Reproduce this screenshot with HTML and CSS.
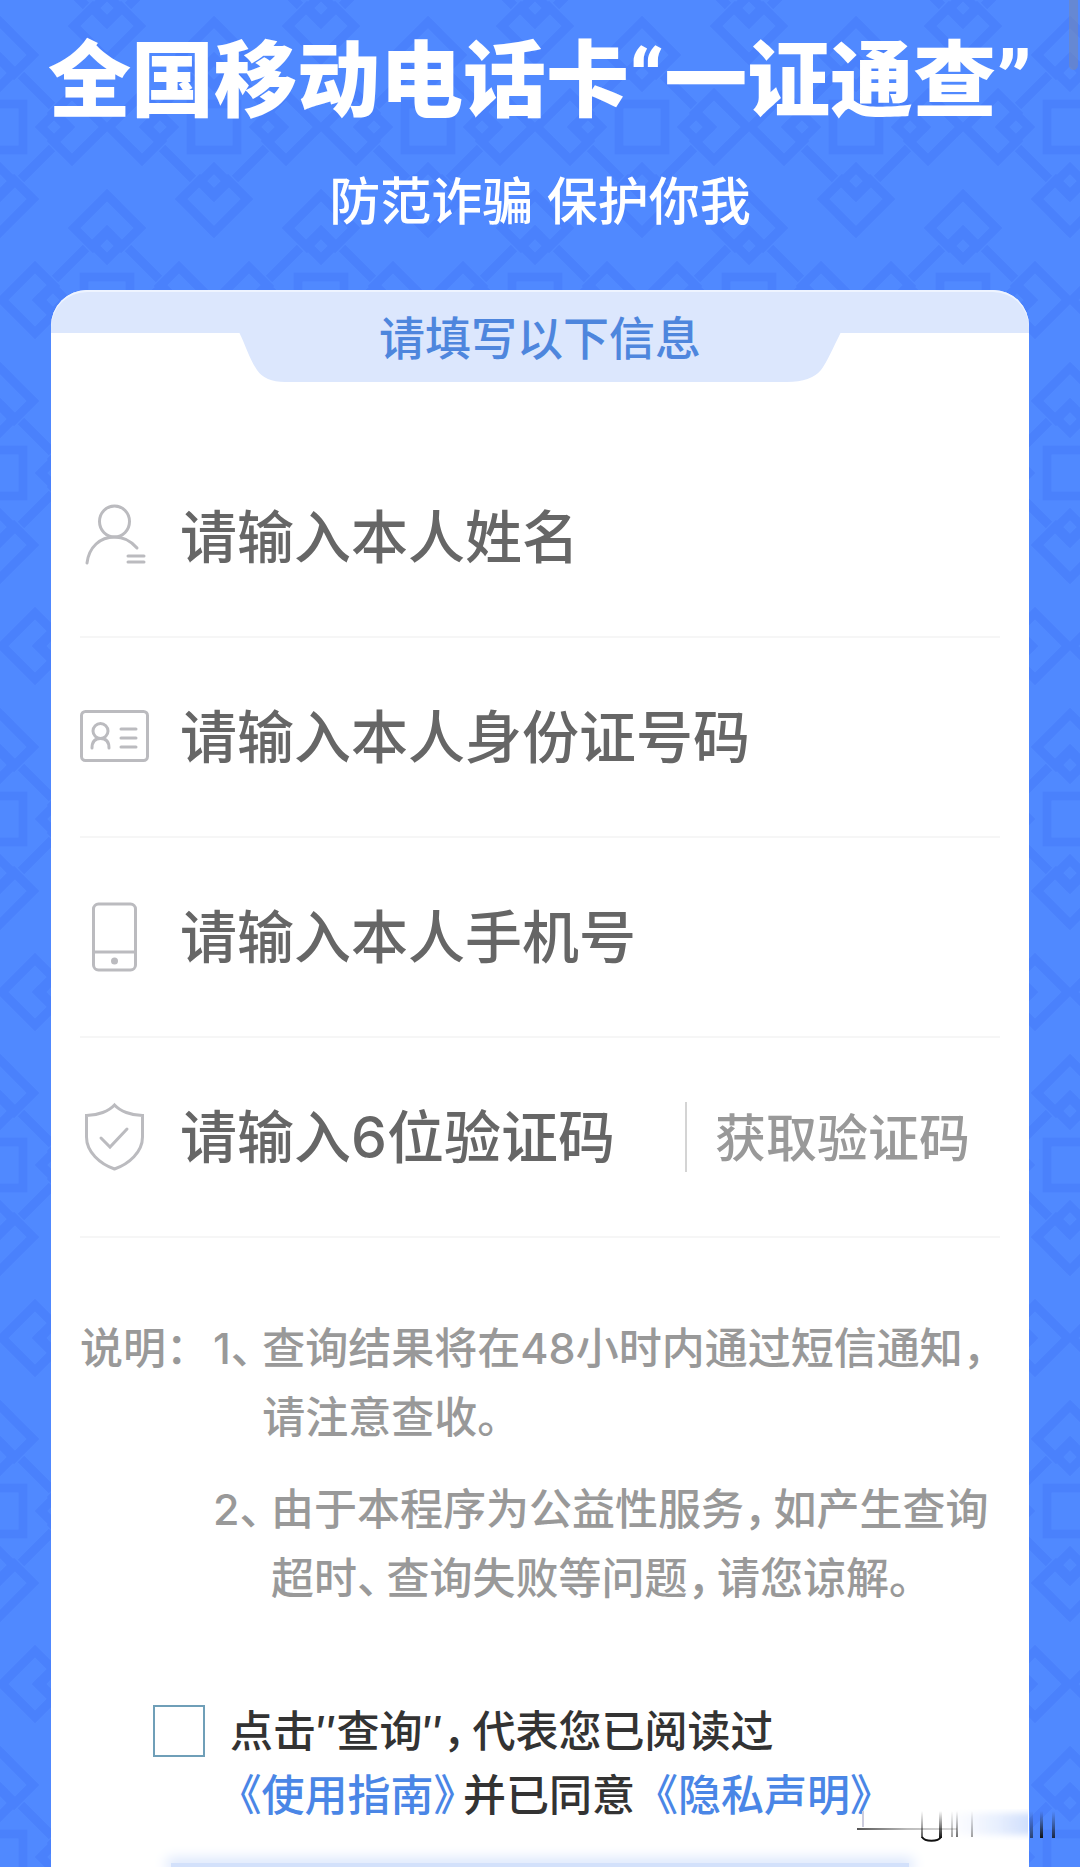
FILE: index.html
```html
<!DOCTYPE html>
<html lang="zh-CN">
<head>
<meta charset="utf-8">
<meta name="viewport" content="width=device-width, initial-scale=1">
<title>全国移动电话卡“一证通查”</title>
<link rel="stylesheet" href="styles.css">
</head>
<body>
<main class="page">
  <header class="hero">
    <h1 class="hero-title">全国移动电话卡“一证通查”</h1>
    <p class="hero-sub">防范诈骗 保护你我</p>
  </header>

  <form class="card">
    <h2 class="card-head">请填写以下信息</h2>

    <div class="card-body">
      <div class="fields">
        <div class="field">
          <label class="field-icon" for="name">
            <svg width="70" height="70" viewBox="0 0 70 70" aria-hidden="true">
              <ellipse cx="34.500" cy="19.500" rx="15" ry="15.500"/>
              <path d="M7 61C9 45 20 35 34.500 35C43 35 51 39 57 46M48 54H64M48 60H64"/>
            </svg>
          </label>
          <input class="field-input" id="name" type="text" aria-label="姓名" placeholder="请输入本人姓名">
        </div>
        <div class="field">
          <label class="field-icon" for="idno">
            <svg width="70" height="70" viewBox="0 0 70 70" aria-hidden="true">
              <rect x="1.500" y="9.500" width="66" height="49" rx="4"/>
              <circle cx="20.500" cy="29" r="7.500"/>
              <path d="M12 46C12 40 15 36.500 20.500 36.500C26 36.500 29 40 29 46M41 27H56M41 36H56M41 45H56"/>
            </svg>
          </label>
          <input class="field-input" id="idno" type="text" aria-label="身份证号码" placeholder="请输入本人身份证号码">
        </div>
        <div class="field">
          <label class="field-icon" for="phone">
            <svg width="70" height="70" viewBox="0 0 70 70" aria-hidden="true">
              <rect x="13.500" y="2" width="42" height="66" rx="5"/>
              <path d="M13.500 50H55.500"/>
              <circle class="dot" cx="34.500" cy="59" r="3.500"/>
            </svg>
          </label>
          <input class="field-input" id="phone" type="tel" aria-label="手机号" placeholder="请输入本人手机号">
        </div>
        <div class="field">
          <label class="field-icon" for="code">
            <svg width="70" height="70" viewBox="0 0 70 70" aria-hidden="true">
              <path d="M34.500 3C29 9 18 13.500 6.500 13.500V35C6.500 50 20 62 34.500 67C49 62 62.500 50 62.500 35V13.500C51 13.500 40 9 34.500 3Z"/>
              <path d="M21 36L30 45L47 27"/>
            </svg>
          </label>
          <input class="field-input" id="code" type="text" aria-label="验证码" placeholder="请输入6位验证码">
          <button class="code-btn" type="button">获取验证码</button>
        </div>
      </div>

      <section class="notes">
        <p class="notes-label">说明：</p>
        <ol class="notes-list">
          <li class="note"><span class="note-no">1<span class="tight">、</span></span><p>查询结果将在48小时内通过短信通知<span class="tight">，</span>请注意查收。</p></li>
          <li class="note"><span class="note-no">2<span class="tight">、</span></span><p>由于本程序为公益性服务<span class="tight">，</span>如产生查询超时<span class="tight">、</span>查询失败等问题<span class="tight">，</span>请您谅解。</p></li>
        </ol>
      </section>

      <div class="agree">
        <input class="agree-box" id="agree" type="checkbox">
        <div class="agree-text">
          <label for="agree">点击″查询″<span class="tight">，</span>代表您已阅读过</label><br>
          <a class="agree-link" href="#guide"><span class="tight-open">《</span>使用指南<span class="tight">》</span></a>并已同意<a class="agree-link" href="#privacy">《隐私声明》</a>
        </div>
      </div>
    </div>

    <div class="submit-edge"></div>
    <svg class="mark" width="200" height="36" viewBox="0 0 200 36" aria-hidden="true">
      <defs>
        <linearGradient id="haze" x1="0" x2="1" y1="0" y2="0">
          <stop offset="0" stop-color="#e8effd" stop-opacity="0"/>
          <stop offset="1" stop-color="#b4ccfb" stop-opacity=".8"/>
        </linearGradient>
        <linearGradient id="fade" x1="0" x2="0" y1="0" y2="1">
          <stop offset="0" stop-color="#222" stop-opacity="0"/>
          <stop offset="1" stop-color="#111"/>
        </linearGradient>
        <linearGradient id="line" gradientUnits="userSpaceOnUse" x1="0" x2="100" y1="0" y2="0">
          <stop offset="0" stop-color="#555"/>
          <stop offset=".5" stop-color="#bbb"/>
          <stop offset="1" stop-color="#ddd"/>
        </linearGradient>
        <filter id="soft" x="-20%" y="-20%" width="140%" height="140%"><feGaussianBlur stdDeviation="3"/></filter>
        <clipPath id="inside"><rect x="0" y="0" width="171" height="36"/></clipPath>
      </defs>
      <g clip-path="url(#inside)"><rect x="84" y="4" width="100" height="22" fill="url(#haze)" filter="url(#soft)"/></g>
      <rect x="0" y="19" width="100" height="2" fill="url(#line)"/>
      <path d="M6 2V18" stroke="#ccd" stroke-width="2"/>
      <path d="M65 28C68 33 81 33 84 28" fill="none" stroke="#111" stroke-width="2"/>
      <g fill="url(#fade)">
        <rect x="64" y="2" width="2" height="27" opacity=".7"/>
        <rect x="82" y="2" width="3" height="27"/>
        <rect x="94" y="2" width="2" height="26" opacity=".4"/>
        <rect x="99" y="2" width="2" height="26" opacity=".6"/>
        <rect x="114" y="2" width="2" height="26" opacity=".4"/>
        <rect x="173" y="2" width="3" height="27" opacity=".6"/>
        <rect x="183" y="2" width="3" height="27"/>
        <rect x="195" y="2" width="3" height="27" opacity=".8"/>
      </g>
    </svg>
  </form>
  <div class="scroll-thumb"></div>
</main>
</body>
</html>
```
FILE: styles.css
```css
* {
  box-sizing: border-box;
  margin: 0;
  padding: 0;
}

body {
  font-family: "Inter", "Noto Sans CJK SC", sans-serif;
  font-weight: 500;
  color: #333;
}

.page {
  position: relative;
  display: flex;
  flex-direction: column;
  min-height: 100vh;
  overflow: hidden;
  background: #5089ff url("data:image/svg+xml,%3Csvg xmlns='http://www.w3.org/2000/svg' xmlns:xlink='http://www.w3.org/1999/xlink' viewBox='0 0 214 346'%3E%3Cdefs%3E%3Cg id='a'%3E%3Cpath d='M0 -105L33 -72L14 -53L0 -67L-14 -53L-33 -72Z'/%3E%3Cpath d='M0 -69L14 -55L0 -41L-14 -55Z'/%3E%3C/g%3E%3Cg id='m' fill='none' stroke='%23477dfb' stroke-width='9'%3E%3Crect x='-23' y='-23' width='46' height='46'/%3E%3Cpath d='M-52 21L-21 52M52 21L21 52M-52 -21L-21 -52M52 -21L21 -52'/%3E%3Cuse xlink:href='%23a'/%3E%3Cuse xlink:href='%23a' transform='rotate(90)'/%3E%3Cuse xlink:href='%23a' transform='rotate(180)'/%3E%3Cuse xlink:href='%23a' transform='rotate(270)'/%3E%3C/g%3E%3C/defs%3E%3Cg opacity='.7'%3E%3Cuse xlink:href='%23m' x='107' y='173'/%3E%3Cuse xlink:href='%23m'/%3E%3Cuse xlink:href='%23m' x='214'/%3E%3Cuse xlink:href='%23m' y='346'/%3E%3Cuse xlink:href='%23m' x='214' y='346'/%3E%3C/g%3E%3C/svg%3E") 0 127px / 214px 346px;
}

.hero {
  padding: 40px 0 58px;
  text-align: center;
  color: #fff;
  white-space: nowrap;
}

.hero-title {
  font-family: "Roboto", "Noto Sans CJK SC", sans-serif;
  font-size: 83px;
  line-height: 84px;
  font-weight: 900;
}

.hero-sub {
  margin-top: 48px;
  font-size: 51px;
  line-height: 60px;
}

.card {
  position: relative;
  flex: 1;
  display: flex;
  flex-direction: column;
  margin: 0 51px;
  background: #fff;
  border-radius: 36px 36px 0 0;
}

.card-head {
  height: 92px;
  border-radius: 36px 36px 0 0;
  box-shadow: inset 0 2px 0 #eef4ff;
  background:
    linear-gradient(#dce7fd, #dce7fd) top / 100% 43px no-repeat,
    url("data:image/svg+xml,%3Csvg xmlns='http://www.w3.org/2000/svg' viewBox='0 0 606 50' preserveAspectRatio='none'%3E%3Cpath fill='%23dce7fd' d='M2 0H604C596 16 590 30 584 38Q574 50 550 50H48Q28 50 20 38C12 26 9 14 2 0Z'/%3E%3C/svg%3E") center bottom / 62% 50px no-repeat;
  font-size: 46px;
  line-height: 96px;
  font-weight: 500;
  text-align: center;
  color: #4e86dd;
}

.card-body {
  padding: 56px 29px 0;
}

.field {
  display: flex;
  align-items: center;
  height: 200px;
  border-bottom: 2px solid #f6f6f6;
}

.field-icon {
  flex: none;
  display: flex;
}

.field-icon svg {
  fill: none;
  stroke: #bbbbbf;
  stroke-width: 3;
  stroke-linecap: round;
}

.field-icon .dot {
  fill: #bbbbbf;
  stroke: none;
}

.field-input {
  flex: 1;
  min-width: 0;
  height: 84px;
  margin-left: 30px;
  border: 0;
  outline: 0;
  background: none;
  font: inherit;
  font-size: 57px;
  color: #333;
}

.field-input::placeholder {
  color: #666;
  opacity: 1;
}

.code-btn {
  flex: none;
  height: 70px;
  padding: 0 30px 0 28px;
  border: 0;
  border-left: 2px solid #d4d4d4;
  background: none;
  font: inherit;
  font-size: 51px;
  line-height: 74px;
  color: #999;
}

.notes {
  display: flex;
  gap: 4px;
  padding-top: 76px;
  font-size: 43px;
  line-height: 69px;
  color: #999;
}

.notes-label {
  flex: none;
}

.notes-list {
  flex: 1;
  display: flex;
  flex-direction: column;
  gap: 23px;
  list-style: none;
}

.note {
  display: flex;
  gap: 2px;
}

.note-no {
  flex: none;
}

/* half-width forms of full-width punctuation */
.tight,
.tight-open {
  font-feature-settings: "halt";
}

.tight {
  margin-right: 8px;
}

.tight-open {
  margin-left: 10px;
}

.agree {
  display: flex;
  gap: 25px;
  padding: 86px 0 0 73px;
  font-size: 43px;
  line-height: 64px;
}

.agree-box {
  flex: none;
  width: 52px;
  height: 52px;
  margin-top: 6px;
  appearance: none;
  border: 2px solid #6f9fb8;
  background: #fff;
}

.agree-link {
  color: #4a86e6;
  text-decoration: none;
}

/* top edge of the glow around the submit area */
.submit-edge {
  height: 4px;
  margin: 36px 120px 0;
  background: #d3e1fb;
  box-shadow: 0 0 14px 4px #d3e1fb;
}

.mark {
  position: absolute;
  right: -28px;
  bottom: 22px;
}

.scroll-thumb {
  position: absolute;
  top: 0;
  right: 2px;
  width: 9px;
  height: 70px;
  border-radius: 0 0 5px 5px;
  background: rgba(120, 135, 175, .55);
}
```
